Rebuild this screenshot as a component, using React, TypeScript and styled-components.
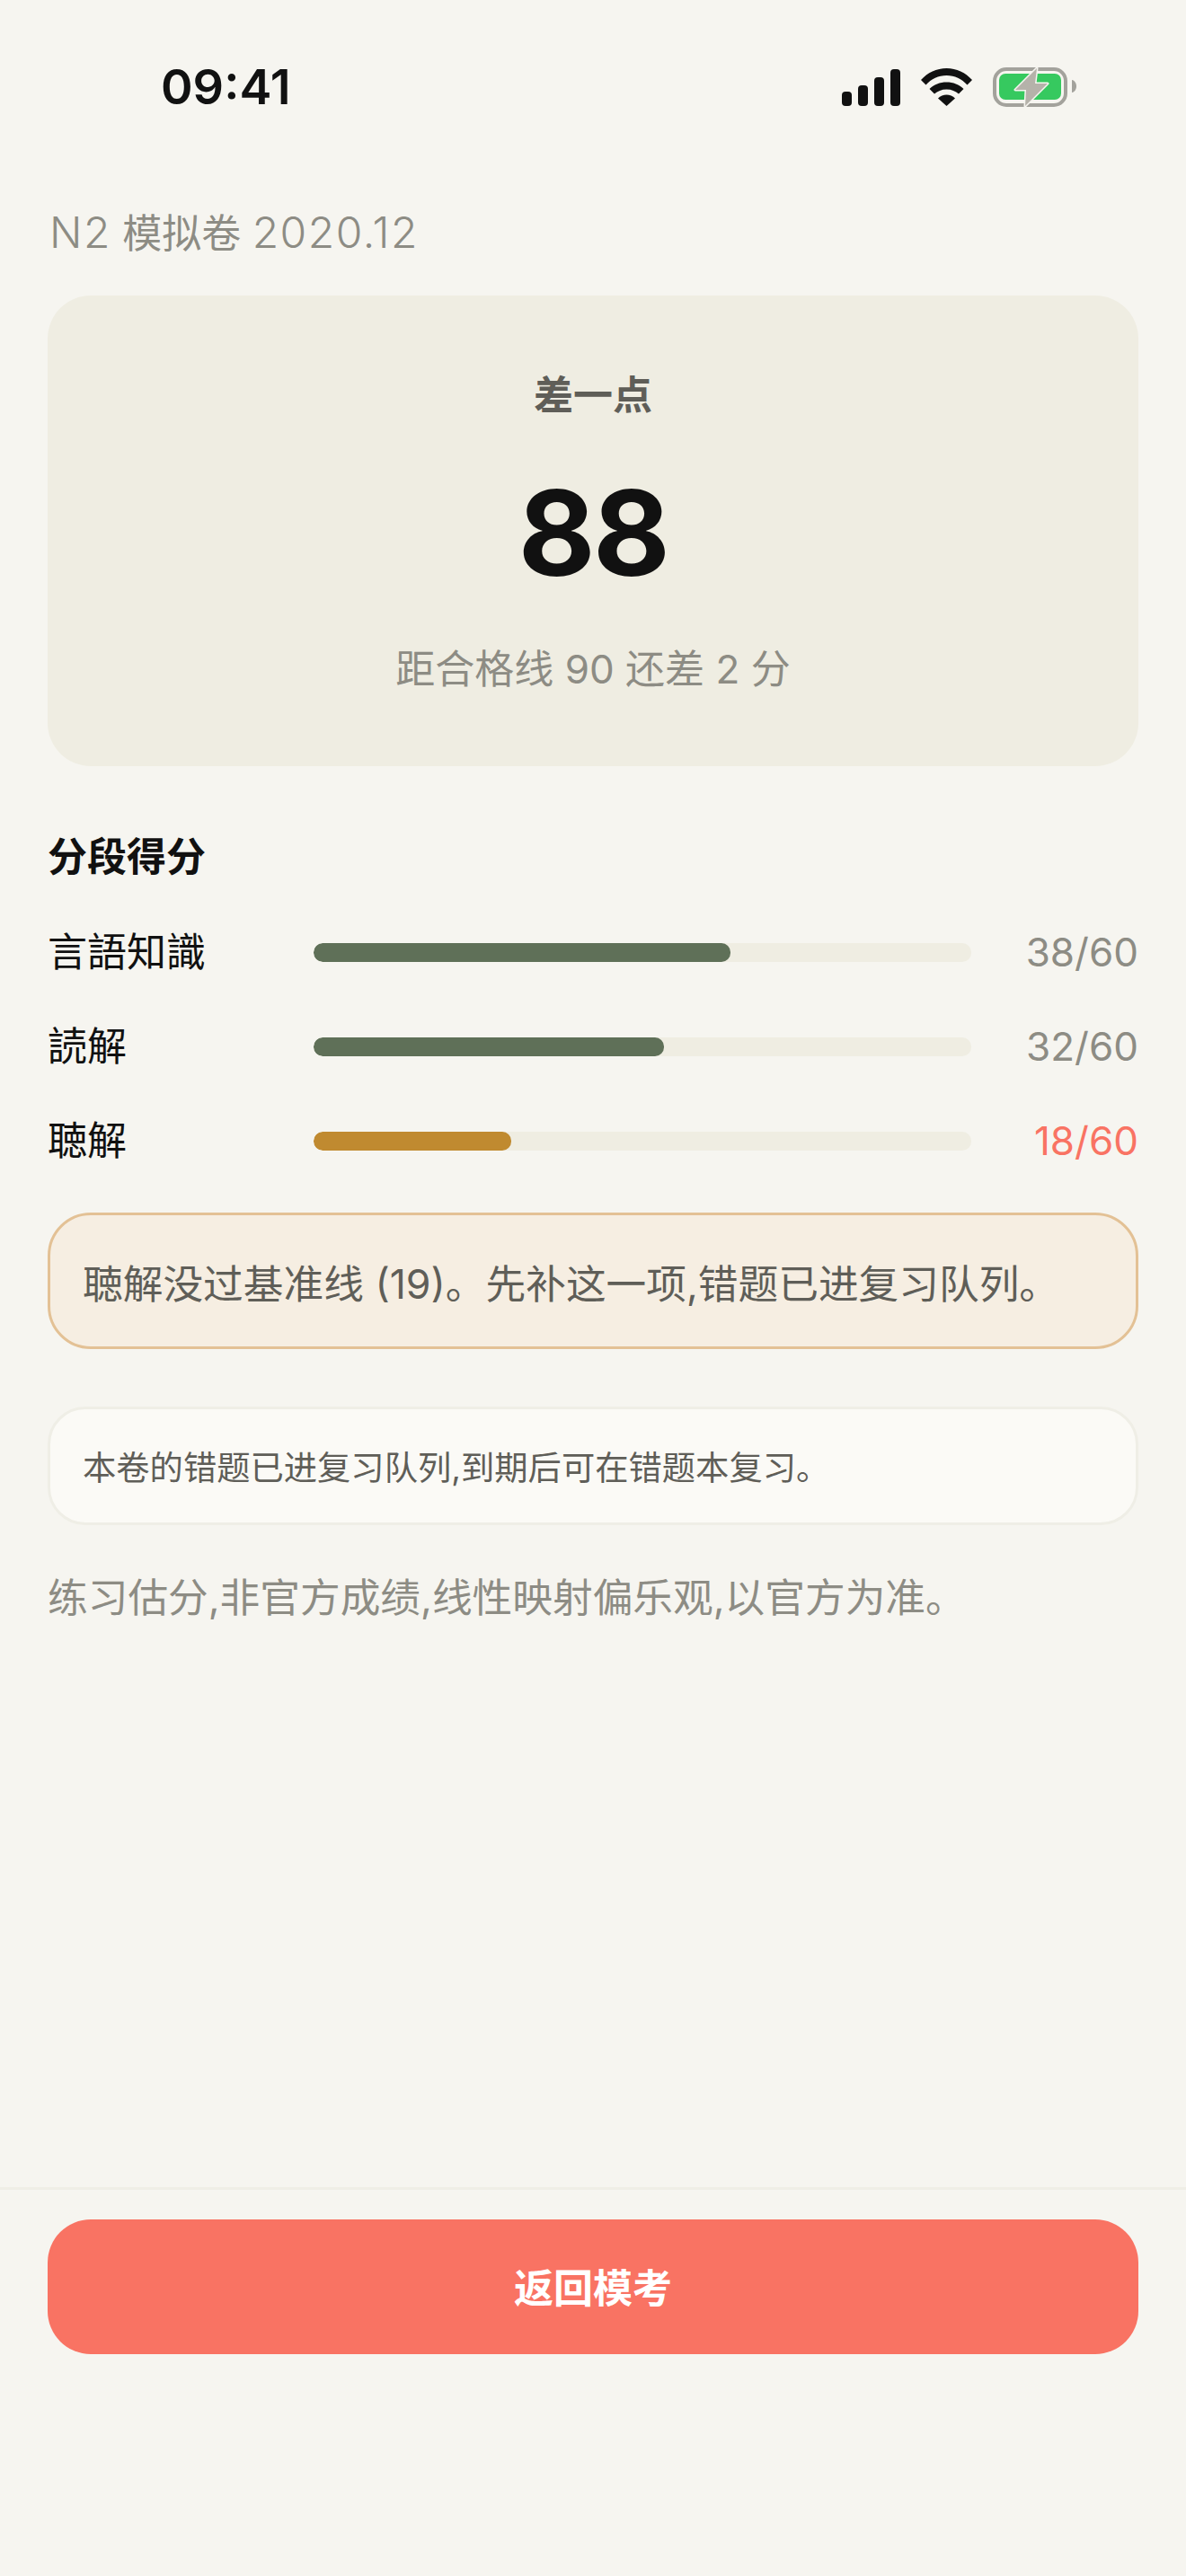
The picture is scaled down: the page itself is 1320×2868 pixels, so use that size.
import React from "react";
import styled, { createGlobalStyle } from "styled-components";

const GlobalStyle = createGlobalStyle`
  html, body {
    margin: 0;
    padding: 0;
    background: #f6f5f0;
  }
  body {
    font-family: Inter, "Noto Sans CJK SC", sans-serif;
  }
`;

const Screen = styled.div`
  width: 1320px;
  height: 2868px;
  display: flex;
  flex-direction: column;
  background: #f6f5f0;
  color: #111111;
`;

const StatusBar = styled.div`
  height: 194px;
  box-sizing: border-box;
  padding: 0 122px 0 179px;
  display: flex;
  align-items: center;
  justify-content: space-between;
  flex-shrink: 0;
`;

const Clock = styled.div`
  font-size: 54px;
  font-weight: 600;
  line-height: 1;
`;

const StatusIcons = styled.div`
  display: flex;
  align-items: center;
  gap: 23px;
`;

const Main = styled.main`
  flex: 1;
  padding: 0 53px;
  display: flex;
  flex-direction: column;
`;

const PaperTitle = styled.div`
  font-size: 44px;
  line-height: 66px;
  margin-top: 32px;
  margin-bottom: 36px;
  padding-left: 2px;
  color: #8d8c84;
`;

const PaperCode = styled.span`
  font-size: 48px;
  font-weight: 300;
  letter-spacing: 1.5px;
`;

const ScoreCard = styled.section`
  height: 524px;
  border-radius: 48px;
  background: #efede2;
  display: flex;
  flex-direction: column;
  align-items: center;
`;

const Verdict = styled.div`
  margin-top: 81px;
  font-size: 44px;
  line-height: 60px;
  font-weight: 700;
  color: #5f5e58;
`;

const Score = styled.div`
  margin-top: 43px;
  font-size: 132px;
  line-height: 160px;
  font-weight: 750;
  letter-spacing: -0.02em;
`;

const Gap = styled.div`
  margin-top: 39px;
  font-size: 44px;
  line-height: 66px;
  color: #8d8c84;
`;

const SectionTitle = styled.h2`
  margin: 70px 0 0;
  font-size: 44px;
  line-height: 62px;
  font-weight: 700;
`;

const Rows = styled.div`
  margin-top: 42px;
  display: flex;
  flex-direction: column;
  gap: 39px;
`;

const Row = styled.div`
  display: grid;
  grid-template-columns: 296px 732px 1fr;
  align-items: center;
  height: 66px;
`;

const RowLabel = styled.div`
  font-size: 44px;
  line-height: 66px;
`;

const Track = styled.div`
  height: 21px;
  border-radius: 10px;
  background: #efede2;
  overflow: hidden;
`;

const Fill = styled.div<{ $tone: "ok" | "low" }>`
  height: 100%;
  border-radius: 10px;
  background: ${(p) => (p.$tone === "low" ? "#c08a30" : "#5f7058")};
`;

const RowValue = styled.div<{ $tone: "ok" | "low" }>`
  font-size: 44px;
  line-height: 66px;
  text-align: right;
  color: ${(p) => (p.$tone === "low" ? "#f97363" : "#8d8c84")};
`;

const Warning = styled.div`
  margin-top: 47px;
  height: 152px;
  box-sizing: border-box;
  padding: 0 36px;
  display: flex;
  align-items: center;
  border: 3px solid #e3c195;
  border-radius: 48px;
  background: #f6eee2;
  font-size: 44.7px;
  color: #5f5e58;
`;

const Note = styled.div`
  margin-top: 64px;
  height: 132px;
  box-sizing: border-box;
  padding: 0 36px;
  display: flex;
  align-items: center;
  border: 3px solid #efeee6;
  border-radius: 42px;
  background: #fbfaf6;
  font-size: 37.3px;
  color: #5f5e58;
`;

const Disclaimer = styled.p`
  margin: 48px 0 0;
  font-size: 44.7px;
  line-height: 66px;
  color: #8d8c84;
`;

const Footer = styled.footer`
  flex-shrink: 0;
  height: 433px;
  box-sizing: border-box;
  padding: 33px 53px 0;
  border-top: 3px solid #efeee6;
`;

const BackButton = styled.button`
  display: block;
  width: 100%;
  height: 150px;
  padding: 0 0 3px;
  border: none;
  border-radius: 48px;
  background: #f97363;
  color: #ffffff;
  font-family: inherit;
  font-size: 44px;
  font-weight: 700;
`;

const sections = [
  { name: "言語知識", score: 38, tone: "ok" as const },
  { name: "読解", score: 32, tone: "ok" as const },
  { name: "聴解", score: 18, tone: "low" as const },
];

function SignalIcon() {
  return (
    <svg width="65" height="41" viewBox="0 0 65 41" fill="#111111">
      <rect x="0" y="25" width="11" height="16" rx="4" />
      <rect x="18" y="18" width="11" height="23" rx="4" />
      <rect x="36" y="9" width="11" height="32" rx="4" />
      <rect x="54" y="0" width="11" height="41" rx="4" />
    </svg>
  );
}

function WifiIcon() {
  return (
    <svg width="57" height="42" viewBox="0 0 57 42" fill="#111111">
      <path d="M0 13C7.3 5 17.4 0 28.5 0C39.6 0 49.7 5 57 13L51.5 18.5C45.5 12 37.5 8 28.5 8C19.5 8 11.5 12 5.5 18.5Z" />
      <path d="M9.5 23C14.5 18 21 15.5 28.5 15.5C36 15.5 42.5 18 47.5 23L42 28.5C38.5 25.5 34 23.5 28.5 23.5C23 23.5 18.5 25.5 15 28.5Z" />
      <path d="M19 33.5C21.5 31 25 29.5 28.5 29.5C32 29.5 35.5 31 38 33.5L28.5 42Z" />
    </svg>
  );
}

function BatteryIcon() {
  return (
    <svg width="93" height="44" viewBox="0 0 93 44" fill="none">
      <rect x="2" y="2" width="79" height="40" rx="13" stroke="#a3a29c" strokeWidth="4" />
      <rect x="7" y="7" width="69" height="29" rx="7" fill="#36c95f" />
      <path d="M88 14C91 14.5 93 17.5 93 21C93 24.5 91 27.5 88 28Z" fill="#a3a29c" />
      <path
        d="M49 1L25 25L37 25L36 43L61 18L47 18Z"
        fill="#b5b2aa"
        stroke="#f6f5f0"
        strokeWidth="3"
        strokeLinejoin="round"
        paintOrder="stroke"
      />
    </svg>
  );
}

export default function App() {
  return (
    <Screen>
      <GlobalStyle />
      <StatusBar>
        <Clock>09:41</Clock>
        <StatusIcons>
          <SignalIcon />
          <WifiIcon />
          <BatteryIcon />
        </StatusIcons>
      </StatusBar>
      <Main>
        <PaperTitle>
          <PaperCode>N2</PaperCode> 模拟卷 <PaperCode>2020.12</PaperCode>
        </PaperTitle>
        <ScoreCard>
          <Verdict>差一点</Verdict>
          <Score>88</Score>
          <Gap>距合格线 90 还差 2 分</Gap>
        </ScoreCard>
        <SectionTitle>分段得分</SectionTitle>
        <Rows>
          {sections.map((s) => (
            <Row key={s.name}>
              <RowLabel>{s.name}</RowLabel>
              <Track>
                <Fill $tone={s.tone} style={{ width: `${(s.score / 60) * 100}%` }} />
              </Track>
              <RowValue $tone={s.tone}>{s.score}/60</RowValue>
            </Row>
          ))}
        </Rows>
        <Warning>聴解没过基准线 (19)。先补这一项,错题已进复习队列。</Warning>
        <Note>本卷的错题已进复习队列,到期后可在错题本复习。</Note>
        <Disclaimer>练习估分,非官方成绩,线性映射偏乐观,以官方为准。</Disclaimer>
      </Main>
      <Footer>
        <BackButton>返回模考</BackButton>
      </Footer>
    </Screen>
  );
}
